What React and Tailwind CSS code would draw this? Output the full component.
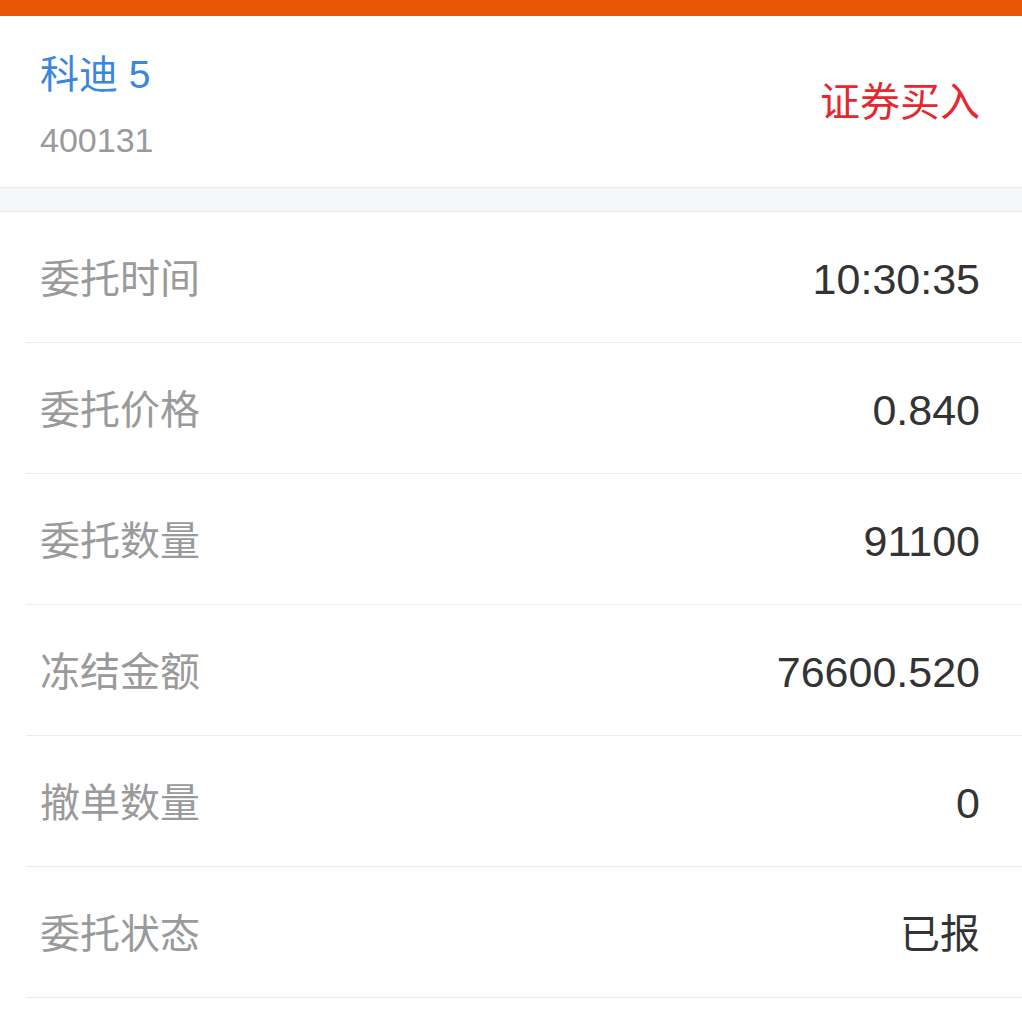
export default function App() {
  const rows = [
    ['委托时间', '10:30:35'],
    ['委托价格', '0.840'],
    ['委托数量', '91100'],
    ['冻结金额', '76600.520'],
    ['撤单数量', '0'],
    ['委托状态', '已报', true],
  ];

  const cjk = { fontFamily: '"Liberation Sans", "Noto Sans CJK SC", sans-serif' };

  return (
    <div className="min-h-screen w-[1022px] bg-white" style={cjk}>
      {/* Top bar */}
      <div className="h-[16px] bg-[#e85505]" />

      {/* Header */}
      <div className="flex h-[171px] items-center justify-between pl-[40px] pr-[42px]">
        <div className="flex h-full flex-col pt-[37px]">
          <div className="text-[39px] leading-[44px] text-[#3b86de]">科迪 5</div>
          <div className="mt-[23px] text-[34px] leading-[40px] text-[#9a9a9a]">400131</div>
        </div>
        <div className="text-[40px] leading-[44px] text-[#e8262f]">证券买入</div>
      </div>

      {/* Gap band */}
      <div className="h-[25px] border-y border-[#e9e9eb] bg-[#f5f6f8]" />

      {/* Detail rows */}
      <div className="pl-[26px]">
        {rows.map(([label, value, isText]) => (
          <div
            key={label}
            className="flex h-[131px] items-center justify-between border-b border-[#ececec] pl-[14px] pr-[42px] pt-[4px]"
          >
            <span className="text-[40px] text-[#9a9a9a]">{label}</span>
            <span className={isText ? 'text-[40px] text-[#333333]' : 'text-[43px] text-[#333333]'}>
              {value}
            </span>
          </div>
        ))}
      </div>
    </div>
  );
}
